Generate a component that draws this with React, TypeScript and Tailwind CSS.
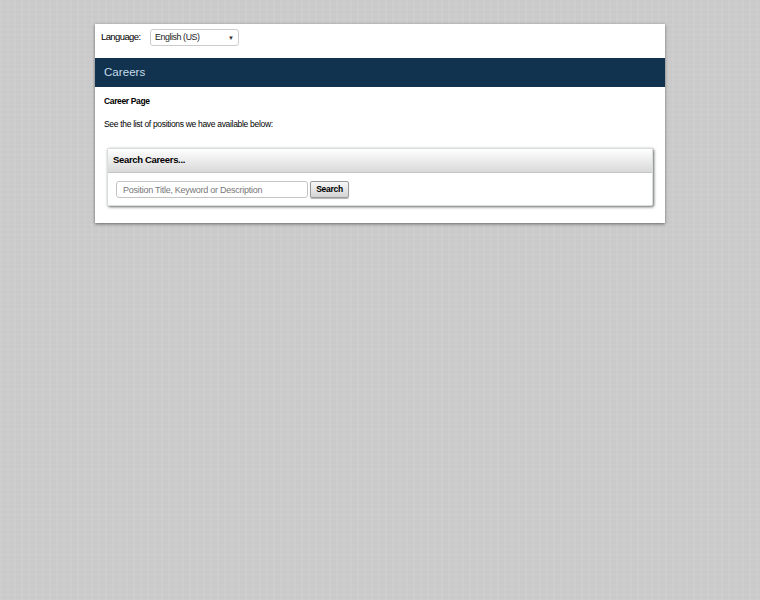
export default function App() {
  return (
    <div className="h-[600px] overflow-hidden bg-[#cecece] bg-[repeating-linear-gradient(90deg,rgba(255,255,255,0.025)_0px,rgba(255,255,255,0.025)_2px,rgba(0,0,0,0.01)_2px,rgba(0,0,0,0.01)_7px),repeating-linear-gradient(0deg,rgba(255,255,255,0.018)_0px,rgba(255,255,255,0.018)_1px,rgba(0,0,0,0.01)_1px,rgba(0,0,0,0.01)_5px)] pt-6 font-['Liberation_Sans',Arial,sans-serif]">
      <div className="mx-auto h-[199px] w-[570px] bg-white shadow-[0_1px_3px_rgba(0,0,0,0.5)]">
        <div className="flex h-[34px] items-center pl-[6px] pb-[8px]">
          <span className="w-[40px] text-[9.5px] leading-none tracking-[-0.6px] whitespace-nowrap text-black">Language:</span>
          <div className="mt-[1px] ml-[9px] flex h-[17px] w-[89px] items-center justify-between rounded-[3px] border border-[#cccccc] bg-white pl-[4px] pr-[3px] text-[#222]">
            <span className="text-[8.8px] tracking-[-0.4px]">English (US)</span>
            <span className="mr-[1px] text-[6px] leading-none text-[#333]">▼</span>
          </div>
        </div>
        <div className="flex h-[29px] items-center bg-[#12334f] pl-[9px] text-[11.5px] font-light tracking-[0.05px] text-[#c7dcea]">Careers</div>
        <div className="px-[9px] pt-[9px] text-black">
          <div className="text-[8.5px] leading-[11px] font-bold tracking-[-0.36px]">Career Page</div>
          <div className="mt-[6px] pt-[6px] text-[8.5px] leading-[11px] tracking-[-0.31px]">See the list of positions we have available below:</div>
        </div>
        <div className="mx-[12px] mt-[18px] h-[58px] rounded-[2px] border border-[#d8dde0] bg-white shadow-[1px_1px_3px_rgba(0,0,0,0.6)]">
          <div className="flex h-[24px] items-center border-b border-[#c4c4c4] bg-gradient-to-b from-[#ffffff] to-[#d9d9d9] pl-[5px] text-[9.5px] font-bold tracking-[-0.33px] text-black">Search Careers...</div>
          <div className="flex items-center pl-[8px] pt-[8px]">
            <input
              readOnly
              placeholder="Position Title, Keyword or Description"
              className="h-[17px] w-[192px] rounded-[3px] border border-[#c4c4c4] bg-white pl-[6px] text-[9px] tracking-[-0.26px] outline-none placeholder:text-[#777]"
            />
            <button className="ml-[2px] h-[17px] w-[39px] rounded-[2px] border border-[#9a9a9a] bg-gradient-to-b from-[#f8f8f8] to-[#d4d4d4] text-[8.5px] font-bold tracking-[-0.3px] text-black shadow-[0_1px_1px_rgba(0,0,0,0.3)]">Search</button>
          </div>
        </div>
      </div>
    </div>
  );
}
